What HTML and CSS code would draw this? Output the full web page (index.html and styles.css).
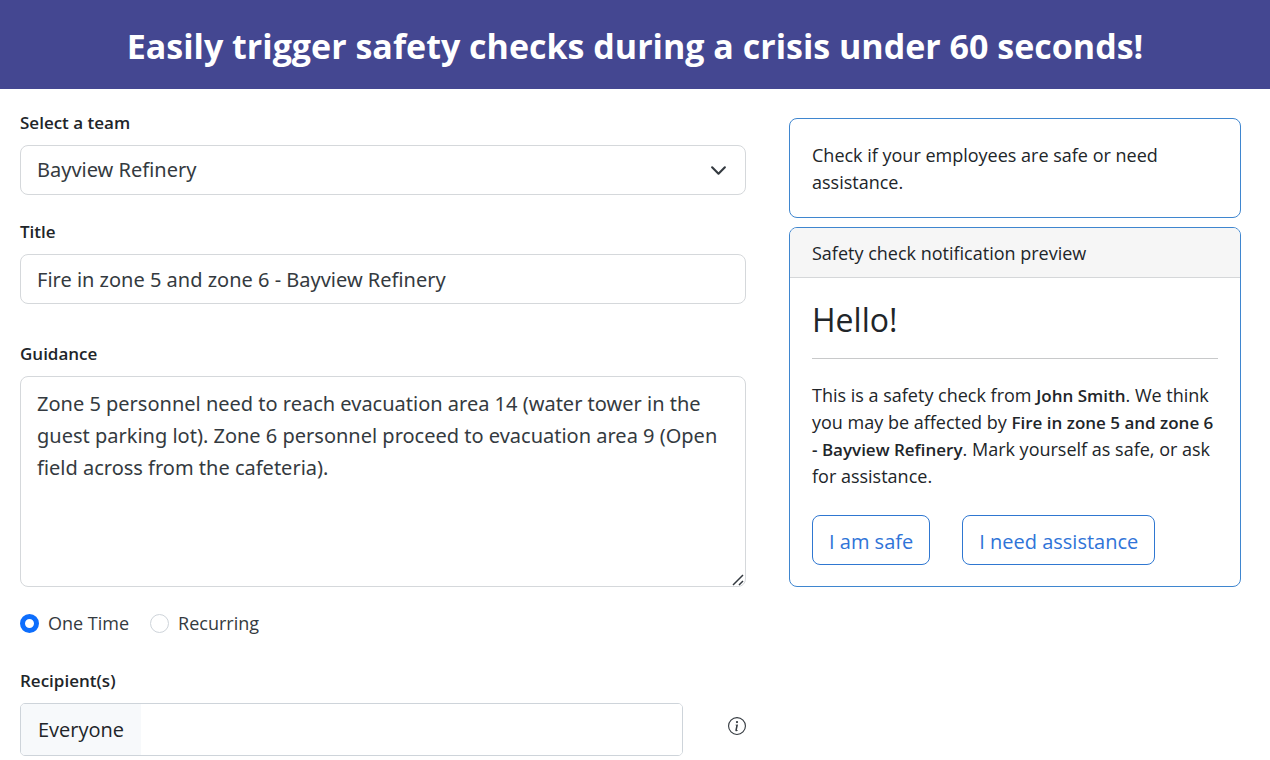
FILE: index.html
```
<!DOCTYPE html>
<html lang="en">
<head>
    <meta charset="UTF-8">
    <meta name="viewport" content="width=device-width, initial-scale=1.0">
    <title>Safety Check</title>
    <link rel="stylesheet" href="styles.css">
</head>
<body>

<header class="banner">
    <h1>Easily trigger safety checks during a crisis under 60 seconds!</h1>
</header>

<main class="page">
    <form class="check-form">
        <div class="form-group">
            <label class="form-label" for="team">Select a team</label>
            <div class="select-box">
                <select class="form-control" id="team">
                    <option>Bayview Refinery</option>
                </select>
                <svg class="chevron" viewBox="0 0 16 16" aria-hidden="true">
                    <path d="M2 5l6 6 6-6"/>
                </svg>
            </div>
        </div>
        <div class="form-group title-group">
            <label class="form-label" for="title">Title</label>
            <input class="form-control" type="text" id="title" value="Fire in zone 5 and zone 6 - Bayview Refinery">
        </div>
        <div class="form-group">
            <label class="form-label" for="guidance">Guidance</label>
            <div class="textarea-box">
                <textarea class="form-control" id="guidance">Zone 5 personnel need to reach evacuation area 14 (water tower in the guest parking lot). Zone 6 personnel proceed to evacuation area 9 (Open field across from the cafeteria).</textarea>
                <svg class="grip" viewBox="0 0 12 12" aria-hidden="true">
                    <path d="M1 11L11 1M7 11l4-4"/>
                </svg>
            </div>
        </div>
        <div class="radio-row">
            <label class="radio"><input type="radio" name="frequency" checked>One Time</label>
            <label class="radio"><input type="radio" name="frequency">Recurring</label>
        </div>
        <div class="form-group">
            <label class="form-label" for="recipients">Recipient(s)</label>
            <div class="recipient-row">
                <div class="recipient-box">
                    <span class="tag">Everyone</span>
                    <input type="text" id="recipients">
                </div>
                <svg class="info" viewBox="0 0 16 16" role="img" aria-label="Info">
                    <path d="M8 15A7 7 0 1 1 8 1a7 7 0 0 1 0 14m0 1A8 8 0 1 0 8 0a8 8 0 0 0 0 16"/>
                    <path d="m8.93 6.588-2.29.287-.082.38.45.083c.294.07.352.176.288.469l-.738 3.468c-.194.897.105 1.319.808 1.319.545 0 1.178-.252 1.465-.598l.088-.416c-.2.176-.492.246-.686.246-.275 0-.375-.193-.304-.533zM9 4.5a1 1 0 1 1-2 0 1 1 0 0 1 2 0"/>
                </svg>
            </div>
        </div>
    </form>

    <aside class="sidebar">
        <section class="card">
            <p class="card-body">Check if your employees are safe or need assistance.</p>
        </section>
        <section class="card">
            <div class="card-header">Safety check notification preview</div>
            <div class="card-body">
                <h2>Hello!</h2>
                <hr>
                <p>This is a safety check from <strong>John Smith</strong>. We think you may be affected by <strong>Fire in zone 5 and zone 6 - Bayview Refinery</strong>. Mark yourself as safe, or ask for assistance.</p>
                <div class="actions">
                    <button class="button" type="button">I am safe</button>
                    <button class="button" type="button">I need assistance</button>
                </div>
            </div>
        </section>
    </aside>
</main>

</body>
</html>
```
FILE: styles.css
```
/* General styles */
* {
    box-sizing: border-box;
    margin: 0;
    padding: 0;
}
body {
    font-family: "Open Sans", "Noto Sans", sans-serif;
    font-size: 18px;
    line-height: 27px;
    background-color: white;
    color: #212529;
}

/* Purple bar at the top */
.banner {
    background-color: #444791;
    color: white;
    text-align: center;
    padding: 22px 20px 19px;
}
.banner h1 {
    font-size: 34px;
    line-height: 48px;
}

.page {
    display: grid;
    grid-template-columns: 726fr 452fr;
    gap: 43px;
    align-items: start;
    padding: 20px 29px 4px 20px;
}

/* Form */
.form-group {
    margin-bottom: 23px;
}
.title-group {
    margin-bottom: 36px;
}
.form-group:last-child {
    margin-bottom: 0;
}
.form-label {
    display: block;
    margin-bottom: 9px;
    font-size: 17px;
    font-weight: 600;
}
.form-control {
    display: block;
    width: 100%;
    height: 50px;
    padding: 0 16px;
    border: 1px solid #d5d8db;
    border-radius: 8px;
    background-color: white;
    color: #343a40;
    font-family: "Noto Sans", sans-serif;
    font-size: 20px;
    line-height: 32px;
    appearance: none;
}
textarea.form-control {
    height: 211px;
    padding: 11px 16px;
    resize: none;
}
.select-box,
.textarea-box {
    position: relative;
}
.chevron,
.grip {
    position: absolute;
    fill: none;
    stroke: #343a40;
    pointer-events: none;
}
.chevron {
    top: 17px;
    right: 19px;
    width: 17px;
    height: 17px;
    stroke-width: 2;
    stroke-linecap: round;
    stroke-linejoin: round;
}
.grip {
    right: 2px;
    bottom: 1px;
    width: 12px;
    height: 12px;
    stroke-width: 1.5;
}

.radio-row {
    display: flex;
    gap: 21px;
    margin-bottom: 30px;
}
.radio {
    display: flex;
    align-items: center;
    gap: 9px;
    color: #343a40;
}
.radio input {
    width: 19px;
    height: 19px;
    border: 1px solid #ced4da;
    border-radius: 50%;
    background-color: white;
    appearance: none;
}
.radio input:checked {
    border: 5px solid #0d6efd;
}

.recipient-row {
    display: flex;
    align-items: center;
    justify-content: space-between;
    gap: 45px;
}
.recipient-box {
    display: flex;
    flex: 1;
    height: 53px;
    border: 1px solid #ced4da;
    border-radius: 5px;
    overflow: hidden;
}
.recipient-box input {
    flex: 1;
    min-width: 0;
    border: none;
    outline: none;
    font: inherit;
}
.tag {
    padding: 0 17px;
    background-color: #f7f9fb;
    font-size: 20px;
    line-height: 52px;
}
.info {
    width: 18px;
    height: 18px;
    margin-bottom: 7px;
    fill: #343a40;
}

/* Cards on the right */
.sidebar {
    display: grid;
    gap: 9px;
    padding-top: 9px;
}
.card {
    border: 1px solid #3f86cf;
    border-radius: 8px;
    overflow: hidden;
}
.card-header {
    padding: 12px 22px 10px;
    border-bottom: 1px solid #d5d7d9;
    background-color: #f6f6f6;
}
.card-body {
    padding: 23px 22px 21px;
}
.card-body h2 {
    font-size: 32px;
    font-weight: normal;
    line-height: 38px;
}
.card-body hr {
    margin: 19px 0 23px;
    border: none;
    border-top: 1px solid #c8c9ca;
}
.card-body strong {
    font-size: 17px;
    font-weight: 600;
    line-height: 1;
}
.actions {
    display: flex;
    gap: 32px;
    margin-top: 25px;
}
.button {
    height: 50px;
    padding: 2px 16px 0;
    border: 1px solid #2f77d1;
    border-radius: 8px;
    background-color: white;
    color: #2f74d8;
    font-family: inherit;
    font-size: 20px;
    cursor: pointer;
}

/* Stack the columns on small screens */
@media screen and (max-width: 800px) {
    .page {
        grid-template-columns: 1fr;
    }
    .banner h1 {
        font-size: 24px;
        line-height: 32px;
    }
}
```
